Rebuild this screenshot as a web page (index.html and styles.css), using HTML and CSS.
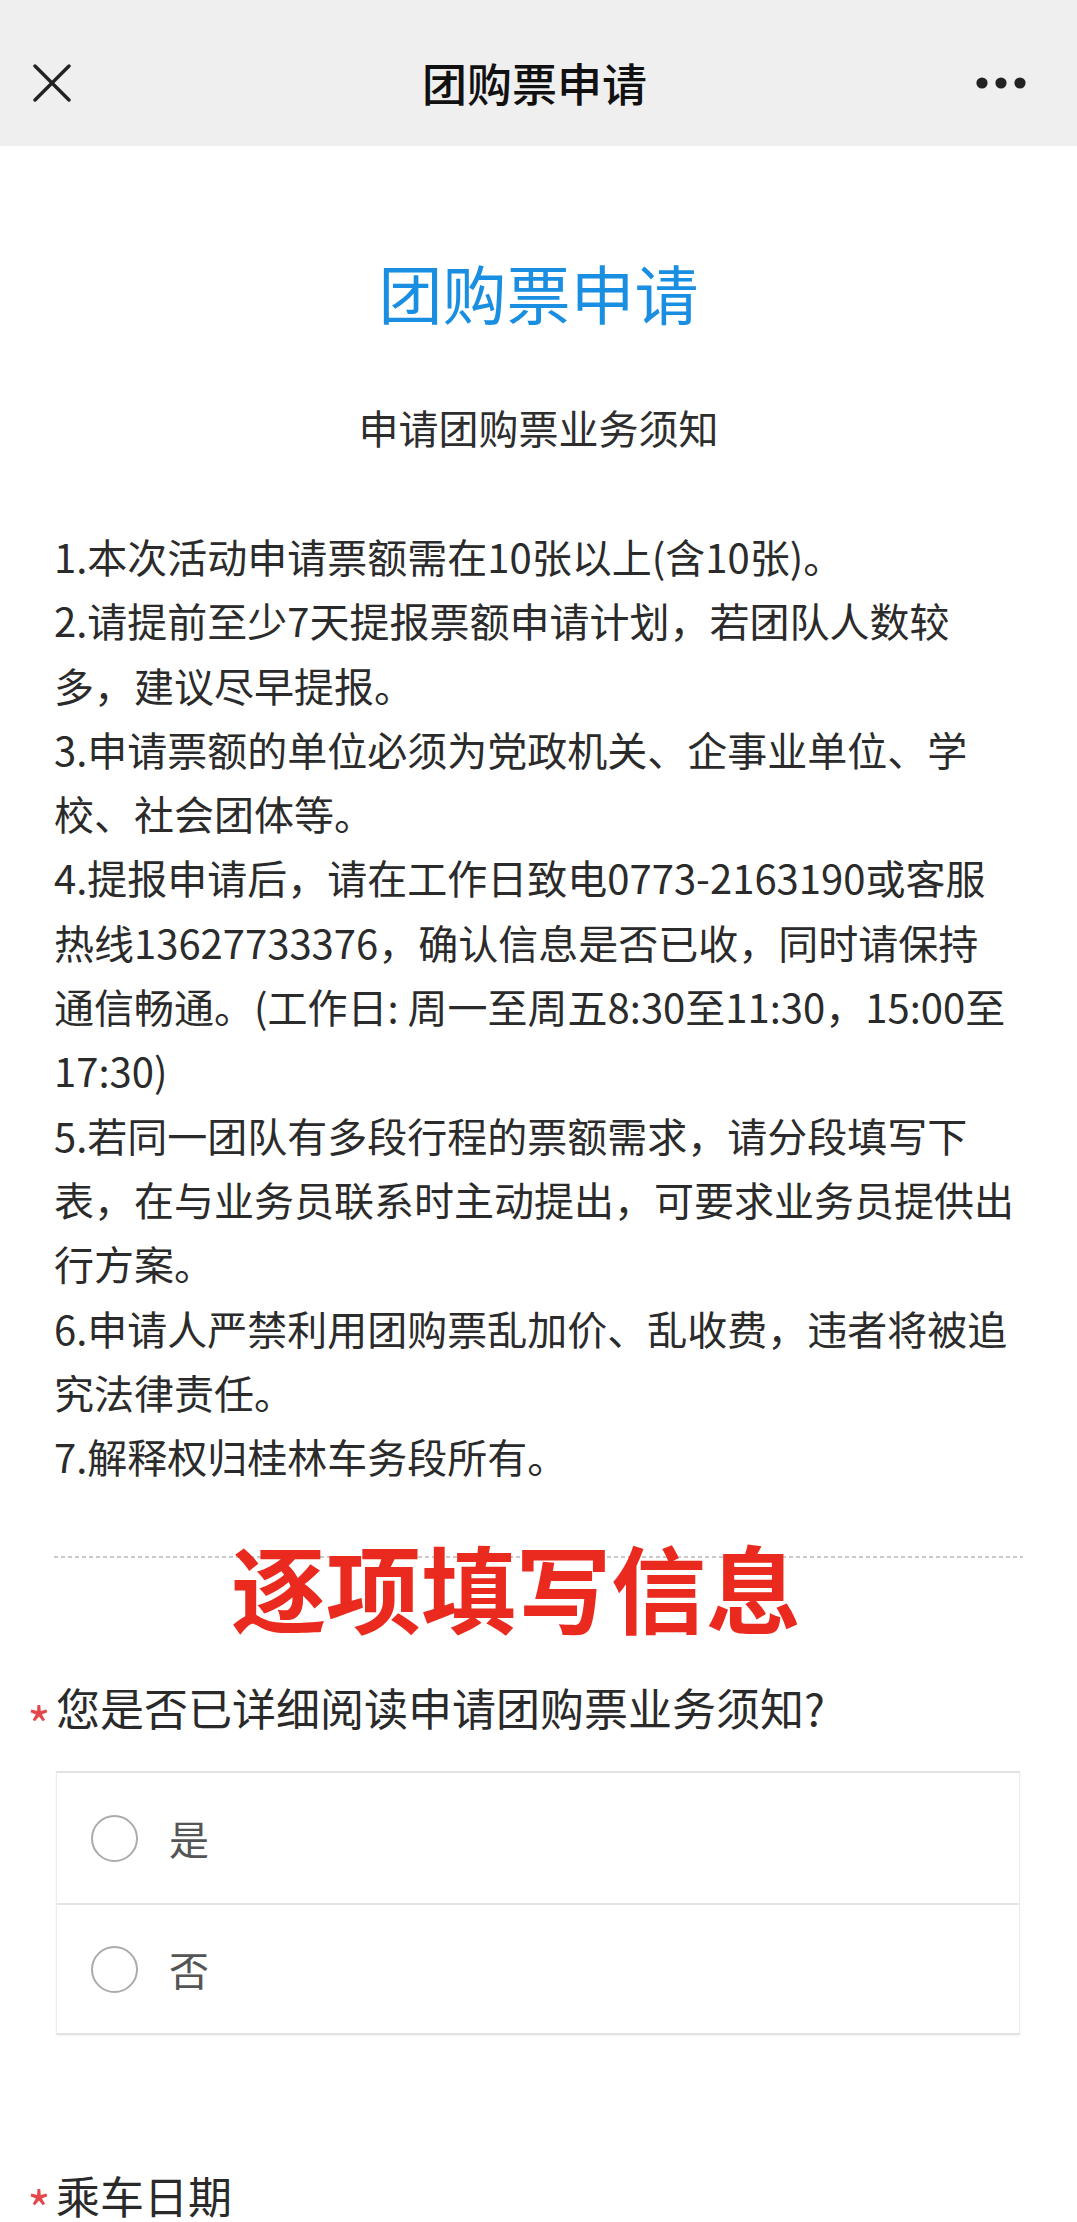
FILE: index.html
```html
<!DOCTYPE html>
<html lang="zh-CN">
<head>
<meta charset="utf-8">
<title>团购票申请</title>
<link rel="stylesheet" href="styles.css">
</head>
<body>
<header class="topbar">
  <div class="topbar-left">
    <svg class="icon-close" width="38" height="38" viewBox="0 0 38 38"><path d="M2 2 L36 36 M36 2 L2 36" stroke="#222" stroke-width="3.4" stroke-linecap="round" fill="none"/></svg>
  </div>
  <div class="topbar-title">团购票申请</div>
  <div class="topbar-right">
    <svg class="icon-more" width="52" height="14" viewBox="0 0 52 14"><circle cx="6" cy="7" r="5.6" fill="#222"/><circle cx="25" cy="7" r="5.6" fill="#222"/><circle cx="44" cy="7" r="5.6" fill="#222"/></svg>
  </div>
</header>

<main class="page">
  <h1 class="form-title">团购票申请</h1>
  <h2 class="form-subtitle">申请团购票业务须知</h2>
  <div class="notice">
    <p>1.本次活动申请票额需在10张以上(含10张)。</p>
    <p>2.请提前至少7天提报票额申请计划，若团队人数较<br>多，建议尽早提报。</p>
    <p>3.申请票额的单位必须为党政机关、企事业单位、学<br>校、社会团体等。</p>
    <p>4.提报申请后，请在工作日致电0773-2163190或客服<br>热线13627733376，确认信息是否已收，同时请保持<br>通信畅通。(工作日: 周一至周五8:30至11:30，15:00至<br>17:30)</p>
    <p>5.若同一团队有多段行程的票额需求，请分段填写下<br>表，在与业务员联系时主动提出，可要求业务员提供出<br>行方案。</p>
    <p>6.申请人严禁利用团购票乱加价、乱收费，违者将被追<br>究法律责任。</p>
    <p>7.解释权归桂林车务段所有。</p>
  </div>

  <div class="divider">
    <div class="annotation">逐项填写信息</div>
  </div>

  <div class="question">
    <span class="required">*</span><span class="q-text">您是否已详细阅读申请团购票业务须知?</span>
  </div>
  <div class="options">
    <label class="option"><span class="radio"></span><span class="opt-text">是</span></label>
    <label class="option"><span class="radio"></span><span class="opt-text">否</span></label>
  </div>

  <div class="question question-date">
    <span class="required">*</span><span class="q-text">乘车日期</span>
  </div>
</main>
</body>
</html>
```

FILE: styles.css
```css
* { box-sizing: border-box; }
html, body {
  margin: 0;
  padding: 0;
  background: #ffffff;
}
body {
  font-family: "Noto Sans CJK SC", "Noto Sans", "Liberation Sans", sans-serif;
  color: #2b2b2b;
  overflow: hidden;
}

.topbar {
  height: 146px;
  padding-top: 20px;
  background: #efefef;
  display: grid;
  grid-template-columns: 1fr auto 1fr;
  align-items: center;
}
.topbar-left {
  padding-left: 33px;
  display: flex;
  align-items: center;
}
.topbar-right {
  display: flex;
  justify-content: flex-end;
  padding-right: 49px;
}
.icon-close, .icon-more { display: block; }
.topbar-title {
  font-size: 45px;
  line-height: 60px;
  font-weight: 500;
  color: #111;
  margin-right: 8px;
}

.page {
  padding: 0 54px;
}
.form-title {
  margin: 105px 0 0;
  font-size: 64px;
  line-height: 80px;
  font-weight: 400;
  color: #1a8fe2;
  text-align: center;
}
.form-subtitle {
  margin: 68px 0 0;
  font-size: 40px;
  line-height: 56px;
  font-weight: 400;
  color: #2e2e2e;
  text-align: center;
}
.notice {
  margin-top: 69px;
  font-size: 40px;
  line-height: 64.3px;
  color: #2b2b2b;
}
.notice p {
  margin: 0;
  white-space: nowrap;
}

.divider {
  position: relative;
  margin-top: 68px;
  height: 2px;
  background-image: linear-gradient(to right, #c9c9c9 0 4px, transparent 4px 7px);
  background-size: 7px 2px;
  background-repeat: repeat-x;
}
.annotation {
  position: absolute;
  left: 177px;
  top: -20px;
  font-size: 95px;
  line-height: 100px;
  font-weight: 700;
  color: #ea2a1e;
  white-space: nowrap;
}

.question {
  margin: 119px 0 0 -32px;
  display: flex;
  align-items: center;
}
.required {
  width: 34px;
  height: 60px;
  font-size: 50px;
  line-height: 60px;
  color: #e5484a;
  padding-top: 16px;
  text-align: center;
  overflow: visible;
}
.q-text {
  font-size: 44px;
  line-height: 60px;
  color: #2a2a2a;
}

.options {
  margin: 34px 3px 0 2px;
  border: 1px solid #ececec;
  border-top: 2px solid #e2e2e2;
  border-bottom: 2px solid #e2e2e2;
  box-shadow: 0 1px 2px rgba(0, 0, 0, 0.06);
  background: #fff;
}
.option {
  height: 130px;
  display: flex;
  align-items: center;
  padding-left: 34px;
  gap: 31px;
}
.option + .option {
  border-top: 2px solid #e4e4e4;
}
.radio {
  width: 47px;
  height: 47px;
  border-radius: 50%;
  border: 2px solid #ababab;
  background: #fff;
  flex: none;
}
.opt-text {
  font-size: 40px;
  line-height: 56px;
  color: #555;
}

.question-date {
  margin-top: 136px;
}
.question-date .q-text {
  line-height: 48px;
}
.question-date .required {
  height: 48px;
  line-height: 48px;
  padding-top: 12px;
}
```
